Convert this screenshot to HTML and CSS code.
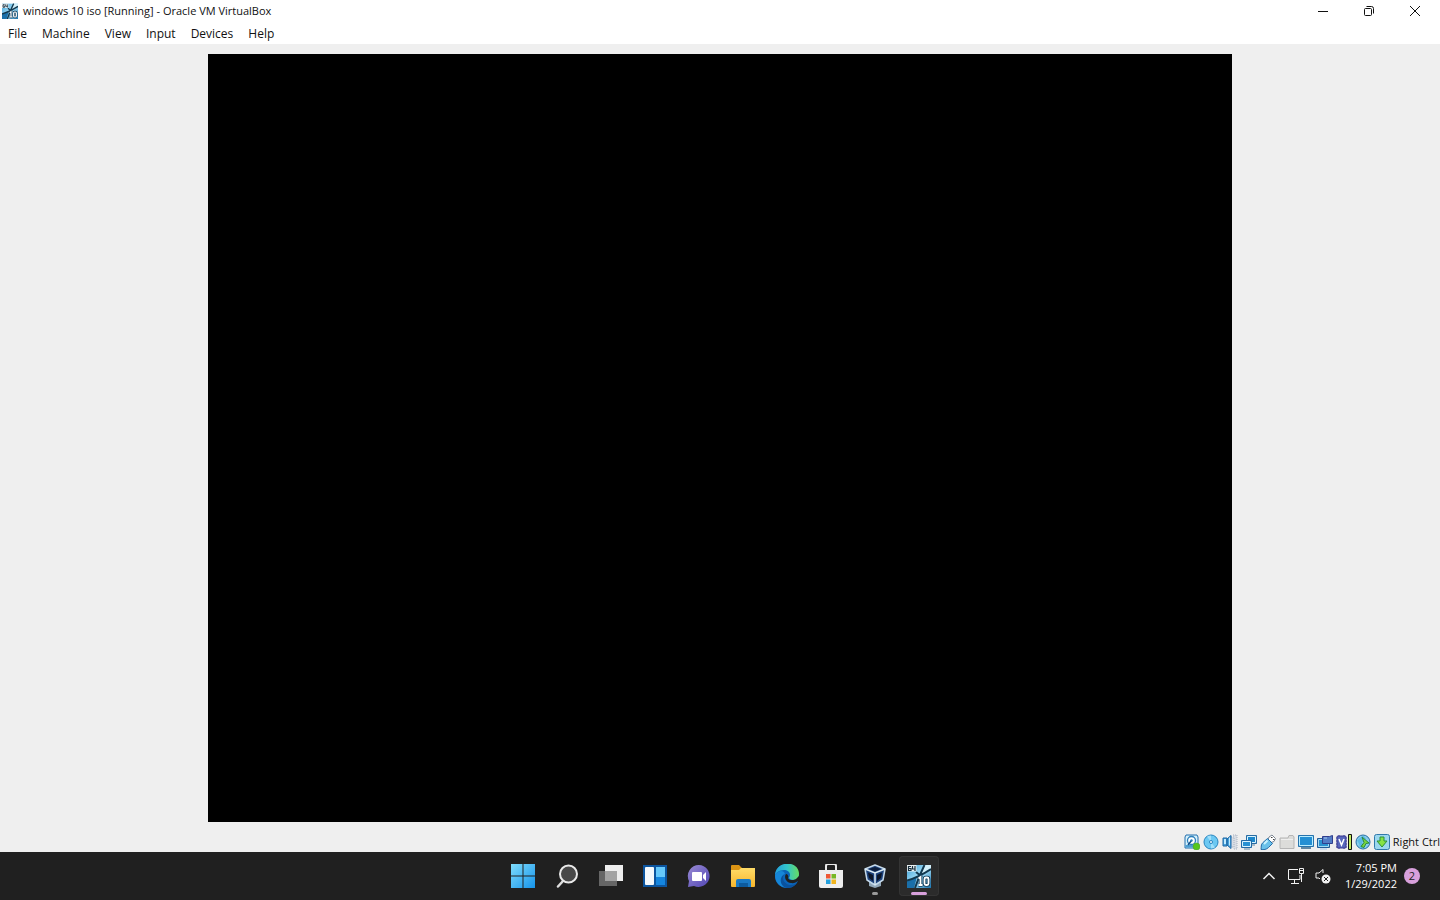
FILE: index.html
```html
<!DOCTYPE html>
<html lang="en">
  <head>
    <meta charset="UTF-8" />
    <meta name="viewport" content="width=device-width, initial-scale=1.0" />
    <title>windows 10 iso [Running] - Oracle VM VirtualBox</title>
    <link rel="stylesheet" href="styles.css">
  </head>

  <body>
    <!-- shared gradients and the guest OS icon -->
    <svg class="defs" aria-hidden="true">
      <defs>
        <linearGradient id="win" x1="0" y1="0" x2="1" y2="1">
          <stop offset="0" stop-color="#7fdcfc" />
          <stop offset="1" stop-color="#1593ea" />
        </linearGradient>
        <linearGradient id="glass" x1="0" y1="0" x2="1" y2="1">
          <stop offset="0" stop-color="#3a9fd8" />
          <stop offset="0.5" stop-color="#a5def6" />
          <stop offset="1" stop-color="#1b75b0" />
        </linearGradient>
        <linearGradient id="chat" x1="0" y1="0" x2="1" y2="1">
          <stop offset="0" stop-color="#9a8bd4" />
          <stop offset="1" stop-color="#5146b4" />
        </linearGradient>
        <linearGradient id="folder" x1="0" y1="0" x2="0" y2="1">
          <stop offset="0" stop-color="#ffdc68" />
          <stop offset="1" stop-color="#f7b52c" />
        </linearGradient>
        <linearGradient id="edge-top" x1="0" y1="0" x2="1" y2="0">
          <stop offset="0" stop-color="#249fdb" />
          <stop offset="0.5" stop-color="#32c5cb" />
          <stop offset="1" stop-color="#67dc62" />
        </linearGradient>
        <linearGradient id="blue" x1="0" y1="0" x2="1" y2="1">
          <stop offset="0" stop-color="#c8f0ff" />
          <stop offset="1" stop-color="#41aee8" />
        </linearGradient>
      </defs>
      <symbol id="guest" viewBox="0 0 24 24">
        <path d="M0 1h24v23H0z" fill="url(#glass)" />
        <path d="M0 17l10-4-3 11H0z" fill="#1a6fa9" />
        <path d="M17 1h7v4l-11 7z" fill="#d3f0fa" />
        <path d="M0 16.500Q12 13 24 5M17.500 1Q12 12 8 24M9 8l6 5" fill="none" stroke="#12384f" stroke-width="2" />
        <path d="M0 1h9.500v6.500H0z" fill="#e9eef0" />
        <path d="M4 2.500H1.500v4H4v-2H2M5.500 2v3h3M8 2v5" fill="none" stroke="#172f3d" stroke-width="1.200" />
        <path d="M11.500 14.500l2-1.500v8m-2 0h4" fill="none" stroke="#123b57" stroke-width="3.500" />
        <rect x="17.500" y="13.500" width="4" height="7.500" rx="1.500" fill="none" stroke="#123b57" stroke-width="3.500" />
        <path d="M11.500 14.500l2-1.500v8m-2 0h4" fill="none" stroke="#fff" stroke-width="1.800" />
        <rect x="17.500" y="13.500" width="4" height="7.500" rx="1.500" fill="none" stroke="#fff" stroke-width="1.800" />
      </symbol>
    </svg>

    <header>
      <div class="title-bar">
        <svg class="icon-16"><use href="#guest" /></svg>
        <h1>windows 10 iso [Running] - Oracle VM VirtualBox</h1>
        <div class="window-controls">
          <button type="button" aria-label="Minimize">
            <svg viewBox="0 0 12 12"><path d="M1 6.500h10" /></svg>
          </button>
          <button type="button" aria-label="Restore">
            <svg viewBox="0 0 12 12"><rect x="1.500" y="3.500" width="7" height="7" rx="1" /><path d="M3.500 1.500h5a2 2 0 0 1 2 2v5" /></svg>
          </button>
          <button type="button" aria-label="Close">
            <svg viewBox="0 0 12 12"><path d="M1 1l10 10M11 1L1 11" /></svg>
          </button>
        </div>
      </div>
      <nav class="menu-bar">
        <button type="button">File</button>
        <button type="button">Machine</button>
        <button type="button">View</button>
        <button type="button">Input</button>
        <button type="button">Devices</button>
        <button type="button">Help</button>
      </nav>
    </header>

    <main>
      <div class="guest-screen"></div>
    </main>

    <div class="status-bar">
      <!-- hard disk -->
      <svg class="icon-16" viewBox="0 0 16 16">
        <path d="M2 1h11l1 2v11H1V3z" fill="#d5f0fb" stroke="#226fae" />
        <path d="M1.500 11h12v2.500h-12z" fill="#4d9fd2" />
        <circle cx="7.500" cy="6.500" r="4" fill="#fff" stroke="#2b7fbb" stroke-width="1.300" />
        <path d="M7.500 6.500L4 11" stroke="#174f86" stroke-width="1.500" />
        <circle cx="7.500" cy="6.500" r="1.200" fill="#2b7fbb" />
        <circle cx="12.500" cy="12.500" r="3.500" fill="#55c71c" stroke="#4a9b2c" stroke-width=".5" />
      </svg>
      <!-- optical drive -->
      <svg class="icon-16" viewBox="0 0 16 16">
        <circle cx="8" cy="8" r="7" fill="#6cc8f2" stroke="#2784bf" />
        <path d="M8 8L4 2.500A7 7 0 0 1 8 1.500zM8 8l4 5.500a7 7 0 0 1-4 1z" fill="#c3efff" opacity=".6" />
        <circle cx="8" cy="8" r="1.500" fill="#fff" stroke="#2784bf" />
      </svg>
      <!-- audio -->
      <svg class="icon-16" viewBox="0 0 16 16">
        <path d="M9 3h3v10H9M11 1h4v14h-4" fill="#d8dde4" stroke="#aab3c2" stroke-dasharray="1 1" />
        <path d="M1 4h4v8H1zM5 5l4-3.500v13L5 11z" fill="#4ba4dc" stroke="#1d67a5" />
        <path d="M2 5h2v5H2zM7 4l1-1v9l-1-1z" fill="#bfeaff" />
      </svg>
      <!-- network -->
      <svg class="icon-16" viewBox="0 0 16 16">
        <path d="M5.500 1.500h10v8h-10z" fill="#1d86ca" stroke="#286ba2" />
        <path d="M6.500 2.500h8v6h-8z" fill="none" stroke="#d9f4ff" />
        <path d="M.5 6.500h10v7H.5z" fill="#2791d3" stroke="#246aa5" />
        <path d="M1.500 7.500h8v5h-8z" fill="none" stroke="#d9f4ff" />
        <path d="M3 15h6M11 11h3" stroke="#6388a2" />
      </svg>
      <!-- usb -->
      <svg class="icon-16" viewBox="0 0 16 16">
        <path d="M9 3l3-2 3.500 3.500L14 7.500l-3 1-3-3z" fill="#fff" stroke="#7b8592" />
        <path d="M11 3.500h1.500M13 5.500h1.500" stroke="#444" />
        <path d="M7.500 4.500l5 5-4 4c-2 2-5 2.500-7.500 2 .5-2-.500-5 2-7z" fill="#6ac1ea" stroke="#246ca8" />
        <path d="M7.500 6.500L4 10" stroke="#c9f3ff" stroke-width="2" />
      </svg>
      <!-- shared folders -->
      <svg class="icon-16" viewBox="0 0 16 16">
        <path d="M1 4h8l1-2.500h4L15 3v11.500H1z" fill="#dcdcda" stroke="#b5b5b5" />
        <path d="M2 5.500h12" stroke="#efefef" />
      </svg>
      <!-- display -->
      <svg class="icon-16" viewBox="0 0 16 16">
        <path d="M.5 1.500h15v11H.5z" fill="#248fd3" stroke="#2773ac" />
        <path d="M1.500 2.500h13v9h-13z" fill="none" stroke="#b9edff" />
        <path d="M3 14h10" stroke="#6388a2" stroke-width="2" />
      </svg>
      <!-- recording -->
      <svg class="icon-16" viewBox="0 0 16 16">
        <path d="M.5 4.500h12v9H.5z" fill="#2a91d1" stroke="#235c98" />
        <path d="M1.500 5.500h10v7h-10z" fill="none" stroke="#a2daf3" />
        <path d="M5.500 2.500h7l3-1v8h-10z" fill="#527cc6" stroke="#313e8c" />
        <path d="M7 4h3M3 15h7" stroke="#a7c7ed" />
      </svg>
      <!-- cpu and its load gauge -->
      <svg class="icon-16" viewBox="0 0 16 16">
        <path d="M3 1v14M8 1v14M0 4h11M0 7h11M0 10h11M0 13h11" stroke="#4245a0" />
        <rect x="1" y="2" width="9" height="12" rx="1" fill="#5867bb" stroke="#3a3b91" />
        <path d="M3 5l2.500 6L8 5" fill="none" stroke="#fff" stroke-width="1.500" />
        <path d="M12.500 .5h3v15h-3z" fill="#c3ed62" stroke="#111" />
      </svg>
      <!-- mouse integration -->
      <svg class="icon-16" viewBox="0 0 16 16">
        <circle cx="8" cy="8" r="7" fill="#85ccec" stroke="#286da4" />
        <path d="M8 1.500l3 3-4 4 1 6-3-1-1-4-2-3z" fill="#5db9e4" />
        <path d="M7 3l7 6-3 .5-2 4-3-1 3-4z" fill="#7bd53c" stroke="#2c8a3d" />
      </svg>
      <!-- keyboard capture -->
      <svg class="icon-16" viewBox="0 0 16 16">
        <rect x=".5" y=".5" width="15" height="15" rx="2" fill="#9bd7ef" stroke="#3179ab" />
        <path d="M6 3h4v4h3l-5 6-5-6h3z" fill="#86e346" stroke="#2b913b" />
      </svg>
      <span>Right Ctrl</span>
    </div>

    <footer class="taskbar">
      <div class="apps">
        <button type="button" aria-label="Start">
          <svg viewBox="0 0 24 24"><path d="M0 0h11.500v11.500H0zM12.500 0H24v11.500H12.500zM0 12.500h11.500V24H0zM12.500 12.500H24V24H12.500z" fill="url(#win)" /></svg>
        </button>
        <button type="button" aria-label="Search">
          <svg viewBox="0 0 24 24"><path d="M8 17l-5 5.500" stroke="#dedede" stroke-width="2.500" stroke-linecap="round" /><circle cx="13.500" cy="10" r="8.500" fill="#484848" stroke="#e9e9e9" stroke-width="2" /></svg>
        </button>
        <button type="button" aria-label="Task View">
          <svg viewBox="0 0 24 24"><path d="M6 1h18v16H6z" fill="#eee" /><path d="M0 7h18v15H0z" fill="#666" /><path d="M6 7h12v10H6z" fill="#a3a3a3" /></svg>
        </button>
        <button type="button" aria-label="Widgets">
          <svg viewBox="0 0 24 24"><path d="M0 1h24v22H0z" fill="#0c559f" /><rect x="2" y="3" width="9" height="18" rx="1" fill="#f4f9fc" /><path d="M13 3h9v10h-9z" fill="#66c9fb" /><path d="M13 13h9v8h-9z" fill="#1586df" /></svg>
        </button>
        <button type="button" aria-label="Chat">
          <svg viewBox="0 0 24 24"><path d="M12 1a11 11 0 1 1-5 21l-6 1 1-6A11 11 0 0 1 12 1z" fill="url(#chat)" /><rect x="5" y="8" width="10" height="9" rx="1" fill="#fff" /><path d="M16 11l3-3v9l-3-3z" fill="#fff" /></svg>
        </button>
        <button type="button" aria-label="File Explorer">
          <svg viewBox="0 0 24 24"><path d="M0 2q0-1 1-1h7l3 3h12q1 0 1 1v5H0z" fill="#dc9414" /><path d="M0 6h8l2-2h14v18q0 1-1 1H1q-1 0-1-1z" fill="url(#folder)" /><path d="M5 23v-6q0-2 2-2h11q2 0 2 2v6z" fill="#1979c5" /><path d="M8 19h9v4H8z" fill="#0d5b9e" /></svg>
        </button>
        <button type="button" aria-label="Microsoft Edge">
          <svg viewBox="0 0 24 24"><circle cx="12" cy="12" r="12" fill="#0b65ba" /><path d="M0 11C1-4 24-4 24 10c0 7-8 7-10 4 3-5-1-8-5-8-5 0-8 3-9 5z" fill="url(#edge-top)" /><path d="M0 11c3-5 9-5 10-1-5 3-3 11 4 13C7 25 0 20 0 11z" fill="#1686d8" /><path d="M11 10c-2 2-1 8 5 9 3 .5 5-.5 7-2l1 3 1-9-4 4c-3 2-8 1-8-1 1-1 0-4-2-4z" fill="#202020" /><path d="M10 10c-5 4 0 11 6 11 3 0 5-1 6.500-3C19 24 13 25 9 23 4 19 5 12 10 10z" fill="#0a529e" /></svg>
        </button>
        <button type="button" aria-label="Microsoft Store">
          <svg viewBox="0 0 24 24"><path d="M7 6V2q0-2 2-2h6q2 0 2 2v4" fill="none" stroke="#e9e9e9" stroke-width="2" /><path d="M0 6h24v16q0 2-2 2H2q-2 0-2-2z" fill="#eee" /><path d="M7 10h4.500v4.500H7z" fill="#ef5834" /><path d="M12.500 10H17v4.500h-4.500z" fill="#78b826" /><path d="M7 15.500h4.500V20H7z" fill="#239fdc" /><path d="M12.500 15.500H17V20h-4.500z" fill="#f0b41e" /></svg>
        </button>
        <button type="button" class="running" aria-label="VirtualBox">
          <svg viewBox="0 0 24 24"><path d="M6 18l6-3 6 3v4l-6 2-6-2z" fill="#92a8ba" /><path d="M2 5l10-4 10 4-2 11-8 5-8-5z" fill="#1d427c" stroke="#c4d9ea" stroke-width="1.500" stroke-linejoin="round" /><path d="M6 5l6-2 6 2-6 2.500z" fill="#0d1e3d" /><path d="M5 8.500l5 2.500v6l-4-3zM19 8.500L14 11v6l4-3z" fill="#0b1426" /><path d="M2 5l10 4 10-4M12 9v12" fill="none" stroke="#dbebf4" stroke-width="1.500" /></svg>
        </button>
        <button type="button" class="running active" aria-label="windows 10 iso">
          <svg><use href="#guest" /></svg>
        </button>
      </div>

      <div class="tray">
        <button type="button" aria-label="Show hidden icons">
          <svg viewBox="0 0 16 16"><path d="M2.500 11L8 5.500l5.500 5.500" stroke-width="1.500" /></svg>
        </button>
        <button type="button" aria-label="Network">
          <svg viewBox="0 0 16 16"><path d="M10 1.500H.5v10H12V7M6.500 12v3M3 15.500h8M11.500 .5h4v5h-4zM13.500 5.500V14M12 2.500h3" /></svg>
        </button>
        <button type="button" aria-label="Volume muted">
          <svg viewBox="0 0 16 16"><path d="M8 5V1.500L4 5H1v5h3l1 1" /><circle cx="11" cy="11" r="4.500" fill="#f2f2f2" stroke="none" /><path class="cross" d="M9 9l4 4M13 9l-4 4" /></svg>
        </button>
        <div class="clock">
          <time datetime="19:05">7:05 PM</time>
          <time datetime="2022-01-29">1/29/2022</time>
        </div>
        <span class="badge">2</span>
      </div>
    </footer>
  </body>
</html>
```
FILE: styles.css
```css
body {
  display: flex;
  flex-direction: column;
  height: 100vh;
  margin: 0;
  background-color: #efefef;
  color: #111;
  font-family: "Open Sans", "Noto Sans", sans-serif;
  font-size: 11px;
  line-height: 16px;
}

button {
  padding: 0;
  border: none;
  background: none;
  color: inherit;
  font: inherit;
}

svg {
  display: block;
  flex: none;
}

.defs {
  position: absolute;
  width: 0;
  height: 0;
}

.icon-16 {
  width: 16px;
  height: 16px;
}

header {
  background-color: #fff;
}

.title-bar {
  display: flex;
  align-items: center;
  gap: 5px;
  height: 22px;
  padding: 0 2px;
}

.title-bar h1 {
  flex: 1;
  margin: 0;
  font-size: 11px;
  font-weight: normal;
}

.window-controls {
  display: flex;
  align-self: stretch;
}

.window-controls button {
  display: grid;
  place-items: center;
  width: 46px;
}

.window-controls svg {
  width: 12px;
  height: 12px;
  fill: none;
  stroke: #111;
}

.menu-bar {
  display: flex;
  gap: 15px;
  padding: 4px 8px 2px;
  font-size: 12px;
}

main {
  display: flex;
  flex: 1;
  justify-content: center;
  min-height: 0;
  padding: 10px 0;
}

.guest-screen {
  aspect-ratio: 4 / 3;
  background-color: #000;
}

.status-bar {
  display: flex;
  align-items: center;
  justify-content: flex-end;
  gap: 3px;
  height: 20px;
}

.taskbar {
  display: grid;
  grid-template-columns: 1fr auto 1fr;
  align-items: center;
  height: 48px;
  background-color: #202020;
  color: #fff;
}

.apps {
  display: flex;
  grid-column: 2;
  gap: 4px;
  padding-left: 1px;
}

.apps button {
  display: grid;
  place-items: center;
  position: relative;
  box-sizing: border-box;
  width: 40px;
  height: 40px;
  border-radius: 4px;
}

.apps svg {
  width: 24px;
  height: 24px;
}

.apps .active {
  background-color: #2b2b2b;
  box-shadow: inset 0 0 0 1px #343434;
}

.running::after {
  content: "";
  position: absolute;
  bottom: 1px;
  left: 50%;
  width: 6px;
  height: 3px;
  border-radius: 2px;
  background-color: #9a9a9a;
  transform: translateX(-50%);
}

.active::after {
  width: 16px;
  background-color: #d8a0dc;
}

.tray {
  display: flex;
  align-items: center;
  justify-content: flex-end;
  gap: 11px;
  padding-right: 20px;
}

.tray svg {
  width: 16px;
  height: 16px;
  fill: none;
  stroke: #f2f2f2;
}

.tray .cross {
  stroke: #202020;
}

.clock {
  display: flex;
  flex-direction: column;
  margin-left: 3px;
  text-align: right;
}

.badge {
  width: 16px;
  margin-left: -4px;
  border-radius: 50%;
  background-color: #d8a0dc;
  color: #222;
  text-align: center;
}
```
